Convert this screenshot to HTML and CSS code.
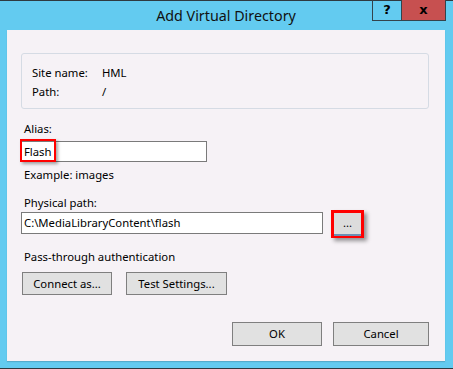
FILE: index.html
```html
<!DOCTYPE html>
<html lang="en">

<head>
    <meta charset="UTF-8">
    <title>Add Virtual Directory</title>
    <link rel="stylesheet" href="styles.css">
</head>

<body>
    <div class="window">
        <div class="titlebar">
            <div class="title">Add Virtual Directory</div>
            <div class="caption-buttons">
                <div class="cap-btn cap-help">?</div>
                <div class="cap-btn cap-close">x</div>
            </div>
        </div>

        <div class="client">
            <div class="info-box">
                <div class="info-row"><span class="info-key">Site name:</span><span>HML</span></div>
                <div class="info-row"><span class="info-key">Path:</span><span>/</span></div>
            </div>

            <div class="label label-first">Alias:</div>
            <div class="field-wrap">
                <div class="textbox textbox-alias">Flash</div>
                <div class="mark mark-alias"></div>
            </div>
            <div class="label label-example">Example: images</div>

            <div class="label label-path">Physical path:</div>
            <div class="path-row">
                <div class="textbox textbox-path">C:\MediaLibraryContent\flash</div>
                <div class="btn btn-browse">...</div>
            </div>

            <div class="label label-auth">Pass-through authentication</div>
            <div class="btn-row">
                <div class="btn btn-connect">Connect as...</div>
                <div class="btn btn-test">Test Settings...</div>
            </div>

            <div class="dialog-buttons">
                <div class="btn btn-ok">OK</div>
                <div class="btn btn-cancel">Cancel</div>
            </div>
        </div>
    </div>
</body>

</html>
```

FILE: styles.css
```css
body {
    margin: 0;
    font-family: "Noto Sans", "Open Sans", sans-serif;
    font-size: 11.3px;
    color: #000;
}

.window {
    width: 453px;
    height: 369px;
    box-sizing: border-box;
    background-color: #63cbf0;
    border-top: 1px solid #2f3a40;
    border-bottom: 1px solid #2f3a40;
    padding: 0 8px 0 7px;
    display: flex;
    flex-direction: column;
}

.titlebar {
    position: relative;
    height: 29px;
    flex: none;
}

.title {
    text-align: center;
    font-size: 14.3px;
    line-height: 30px;
    color: #111;
}

.caption-buttons {
    position: absolute;
    top: -1px;
    right: -1px;
    display: flex;
}

.cap-btn {
    height: 21px;
    box-sizing: border-box;
    border: 1px solid #34434b;
    border-top: none;
    text-align: center;
    font-weight: bold;
    font-family: "DejaVu Sans", sans-serif;
    font-size: 13px;
    line-height: 19px;
}

.cap-help {
    width: 29px;
    border-right: none;
}

.cap-close {
    width: 45px;
    background-color: #c75050;
}

.client {
    flex: 1;
    margin-bottom: 7px;
    background-color: #f6f2f6;
    padding: 23px 16px 0 14px;
    box-shadow: 0 1px 1px rgba(0, 0, 0, 0.15);
}

.info-box {
    height: 56px;
    box-sizing: border-box;
    border: 1px solid #d5dbe4;
    border-radius: 3px;
    padding: 9px 10px 0;
}

.info-row {
    line-height: 19px;
}

.info-key {
    display: inline-block;
    width: 70px;
}

.label {
    line-height: 16px;
    margin-left: 3px;
}

.label-first {
    margin-top: 12px;
}

.label-example {
    margin-top: 5px;
}

.label-path {
    margin-top: 12px;
}

.label-auth {
    margin-top: 15px;
}

.field-wrap {
    position: relative;
    margin-top: 4px;
}

.textbox {
    height: 22px;
    box-sizing: border-box;
    background-color: #fff;
    border: 1px solid #7a7a7a;
    padding-left: 2px;
    line-height: 20px;
    white-space: nowrap;
}

.textbox-alias {
    width: 186px;
    height: 21px;
    line-height: 19px;
}

.mark {
    position: absolute;
    border: 2px solid #f00;
    box-shadow: 2px 2px 3px rgba(0, 0, 0, 0.35);
}

.mark-alias {
    left: -1px;
    top: -2px;
    width: 32px;
    height: 19px;
}

.path-row {
    display: flex;
    align-items: flex-start;
    gap: 8px;
    margin-top: 1px;
    height: 22px;
}

.textbox-path {
    width: 302px;
}

.btn {
    box-sizing: border-box;
    height: 23px;
    background-color: #e1e1e1;
    border: 1px solid #7f7f7f;
    text-align: center;
    line-height: 21px;
}

.btn-browse {
    width: 33px;
    height: 28px;
    margin-top: -2px;
    border: 3px solid #f00;
    border-bottom-width: 2px;
    line-height: 19px;
    background-color: #dcdcdc;
    box-shadow: inset 0 -2px 0 #6d8fb3, 3px 3px 4px rgba(0, 0, 0, 0.4);
}

.btn-row {
    display: flex;
    gap: 14px;
    margin-top: 7px;
    margin-left: 1px;
}

.btn-connect {
    width: 90px;
}

.btn-test {
    width: 101px;
}

.dialog-buttons {
    display: flex;
    justify-content: flex-end;
    gap: 11px;
    margin-top: 27px;
}

.dialog-buttons .btn {
    height: 24px;
    line-height: 22px;
}

.btn-ok {
    width: 90px;
}

.btn-cancel {
    width: 96px;
}
```
